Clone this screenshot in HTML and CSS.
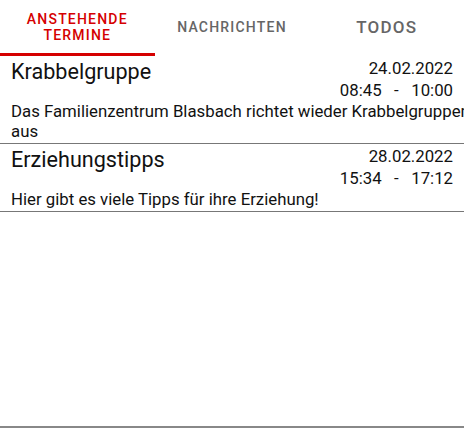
FILE: index.html
```html
<!DOCTYPE html>
<html>
<head>
<meta charset="utf-8">
<link rel="stylesheet" href="styles.css">
</head>
<body>
<div class="app">
  <div class="tabs">
    <div class="tab active"><span>ANSTEHENDE<br>TERMINE</span></div>
    <div class="tab small"><span>NACHRICHTEN</span></div>
    <div class="tab big"><span>TODOS</span></div>
  </div>
  <div class="list">
    <div class="item">
      <div class="head">
        <div class="title">Krabbelgruppe</div>
        <div class="when">
          <div class="date">24.02.2022</div>
          <div class="time">08:45&nbsp;&nbsp;&nbsp;-&nbsp;&nbsp;&nbsp;10:00</div>
        </div>
      </div>
      <div class="desc">Das Familienzentrum Blasbach richtet wieder Krabbelgruppen aus</div>
    </div>
    <div class="item">
      <div class="head">
        <div class="title">Erziehungstipps</div>
        <div class="when">
          <div class="date">28.02.2022</div>
          <div class="time">15:34&nbsp;&nbsp;&nbsp;-&nbsp;&nbsp;&nbsp;17:12</div>
        </div>
      </div>
      <div class="desc">Hier gibt es viele Tipps für ihre Erziehung!</div>
    </div>
  </div>
  <div class="bottom"></div>
</div>
</body>
</html>
```
FILE: styles.css
```css
html, body {
  margin: 0;
  padding: 0;
  background: #fff;
  overflow: hidden;
}
.app {
  width: 464px;
  height: 428px;
  display: flex;
  flex-direction: column;
  font-family: Roboto, "Liberation Sans", sans-serif;
  color: #111;
}
.tabs {
  display: flex;
  height: 56px;
}
.tab {
  flex: 1;
  display: flex;
  align-items: center;
  justify-content: center;
  text-align: center;
  color: #666;
  font-weight: 500;
  letter-spacing: 1.2px;
  box-sizing: border-box;
  padding-bottom: 3px;
}
.tab.active {
  color: #d50000;
  font-size: 14px;
  line-height: 16px;
  border-bottom: 3px solid #d50000;
  padding-bottom: 0;
}
.tab.small { font-size: 14px; }
.tab.big { font-size: 17px; }
.list {
  flex: 1;
}
.item {
  border-bottom: 1px solid #777;
  padding: 0 0 2px 11px;
}
.head {
  display: flex;
  justify-content: space-between;
  padding-right: 11px;
  height: 45px;
}
.title {
  font-size: 21.6px;
  line-height: 28px;
  padding-top: 2px;
}
.when {
  text-align: right;
  font-size: 16.8px;
  line-height: 22px;
  padding-top: 1px;
}
.desc {
  font-size: 16.8px;
  line-height: 20px;
  width: 470px;
}
.bottom {
  height: 2px;
  background: #888;
}
```
